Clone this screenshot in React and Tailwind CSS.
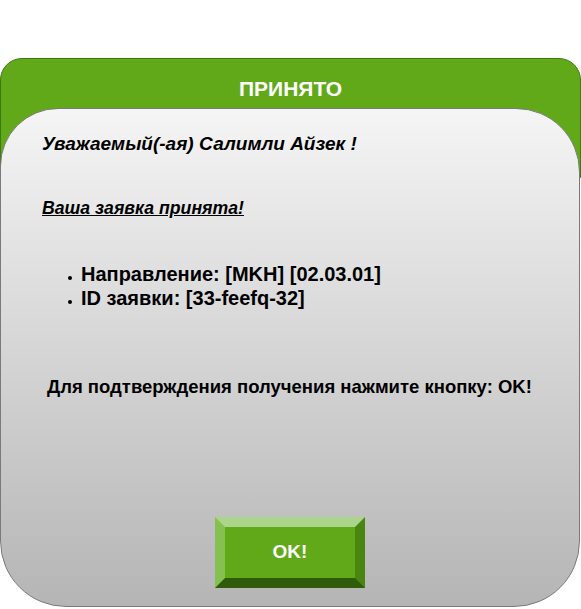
export default function App() {
    return (
        <div className="w-[581px] h-[609px] bg-white pt-[58px] font-['Liberation_Sans',Arial,sans-serif] text-black">

            {/* HEADER */}
            <div className="h-[120px] w-[581px] bg-[#62a919] border border-[#3d7b10] rounded-t-[22px] pt-[18px]">
                <h1 className="text-center text-white font-bold text-[21px] leading-[24px]">
                    ПРИНЯТО
                </h1>
            </div>

            {/* PANEL */}
            <div className="relative -mt-[70px] w-[580px] h-[499px] border border-[#7a7a7a] rounded-tl-[58px] rounded-tr-[64px] rounded-br-[66px] rounded-bl-[66px] bg-gradient-to-b from-[#f5f5f5] to-[#b5b5b5] flex flex-col">

                <p className="mt-[25px] ml-[41px] font-bold italic text-[19px] leading-[20px]">
                    Уважаемый(-ая) Салимли Айзек !
                </p>

                <p className="mt-[44px] ml-[41px] font-bold italic underline text-[17.7px] leading-[20px]">
                    Ваша заявка принята!
                </p>

                <ul className="mt-[46px] ml-[67px] space-y-[4px] font-bold text-[20px] leading-[20px]">
                    <li className="flex items-center gap-[9px]">
                        <span className="w-[4px] h-[4px] rounded-full bg-black mt-[7px]"></span>
                        Направление: [MKH] [02.03.01]
                    </li>
                    <li className="flex items-center gap-[9px]">
                        <span className="w-[4px] h-[4px] rounded-full bg-black mt-[7px]"></span>
                        ID заявки: [33-feefq-32]
                    </li>
                </ul>

                <p className="mt-[69px] ml-[46px] font-bold text-[18.5px] leading-[20px]">
                    Для подтверждения получения нажмите кнопку: OK!
                </p>

                {/* OK BUTTON */}
                <div className="mt-auto mb-[18px] mx-auto">
                    <div className="w-[150px] h-[71px] border-[10px] border-t-[#aad58a] border-l-[#86c04f] border-r-[#4a8511] border-b-[#2f5c0b] bg-[#62a919] flex items-center justify-center text-white font-bold text-[19px]">
                        OK!
                    </div>
                </div>
            </div>
        </div>
    );
}
